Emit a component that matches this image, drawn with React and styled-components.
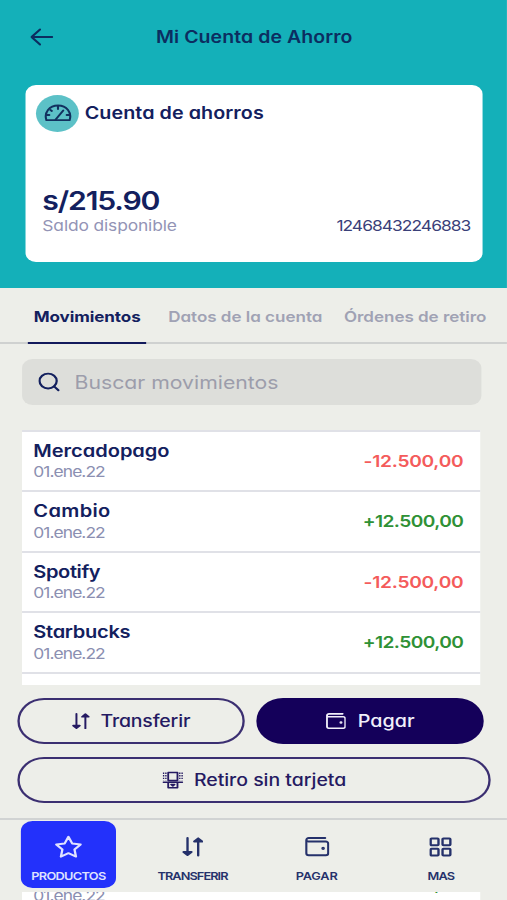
import React from "react";
import styled, { createGlobalStyle } from "styled-components";

const GlobalStyle = createGlobalStyle`
  * { box-sizing: border-box; }
  body {
    margin: 0;
    overflow: hidden;
    background-color: #edeee9;
    font-family: Inter, "Noto Sans", sans-serif;
    font-feature-settings: "cv11";
    color: #13205e;
  }
`;

/* everything is laid out 437px wide and widened to fill the 507px viewport */
const Screen = styled.div`
  position: relative;
  width: 437.07px;
  height: 900px;
  overflow: hidden;
  background-color: #edeee9;
  transform: scaleX(1.16);
  transform-origin: left top;
`;

const Text = styled.span`
  display: block;
  white-space: nowrap;
  font-size: ${({ $size }) => $size}px;
  font-weight: ${({ $weight }) => $weight || 400};
  letter-spacing: ${({ $spacing }) => $spacing || 0}px;
  line-height: ${({ $line }) => $line || 20}px;
  color: ${({ $color }) => $color || "inherit"};
`;

const Header = styled.header`
  height: 287.5px;
  padding: 0 21.2px 0 21.5px;
  background-color: #14b0b9;
`;

const TopBar = styled.div`
  display: grid;
  grid-template-columns: 26px 1fr 26px;
  align-items: center;
  justify-items: center;
  height: 85.4px;
  padding: 0 0 11.4px 1px;
  color: #0c2d60;
`;

const Card = styled.section`
  display: flex;
  flex-direction: column;
  justify-content: space-between;
  height: 177px;
  padding: 9.5px 10.4px 26.5px 9.5px;
  border-radius: 9px;
  background-color: #fff;
`;

const CardHead = styled.div`
  display: flex;
  gap: 5px;
`;

const Badge = styled.div`
  display: flex;
  align-items: center;
  justify-content: center;
  width: 37px;
  height: 37px;
  border-radius: 50%;
  background-color: #5cc1c7;
  color: #12315f;
`;

const CardFoot = styled.div`
  display: flex;
  align-items: flex-end;
  justify-content: space-between;
  padding-left: 5.5px;
`;

const Tabs = styled.nav`
  display: grid;
  grid-template-columns: 116px 151.5px 134px;
  height: 56px;
  padding-left: 24px;
  border-bottom: 2px solid #cfd1d0;
`;

const Tab = styled.div`
  justify-self: start;
  height: 56px;
  padding: 19px 5px 0;
  border-bottom: 2.5px solid ${({ $active }) => ($active ? "#131a5c" : "transparent")};
`;

const Search = styled.div`
  display: flex;
  align-items: center;
  gap: 12.5px;
  height: 45.5px;
  margin: 15.6px 22.4px 0 18.8px;
  padding: 1px 0 0 14.5px;
  border-radius: 9px;
  background-color: #dddeda;
`;

const List = styled.div`
  margin: 25px 23.2px 0 19.4px;
`;

const Row = styled.div`
  display: flex;
  align-items: center;
  justify-content: space-between;
  height: 60.5px;
  padding: 0 14.4px 0 9.3px;
  border-top: 2px solid #e0e1e7;
  background-color: #fff;
`;

const BottomPanel = styled.div`
  position: absolute;
  top: 685px;
  left: 0;
  right: 0;
  height: 206.5px;
  background-color: #edeee9;
`;

const Actions = styled.div`
  display: grid;
  grid-template-columns: 196px 196px;
  gap: 13px 10px;
  height: 133px;
  padding: 13px 0 0 14.6px;
  align-content: start;
`;

const Button = styled.button`
  display: flex;
  align-items: center;
  justify-content: center;
  gap: ${({ $gap }) => $gap || 9}px;
  height: 46px;
  width: ${({ $wide }) => ($wide ? "408.5px" : "auto")};
  grid-column: ${({ $wide }) => ($wide ? "1 / -1" : "auto")};
  padding: 0 0 0 1px;
  border: 2px solid ${({ $filled }) => ($filled ? "#14005a" : "#3b2f71")};
  border-radius: 23px;
  background-color: ${({ $filled }) => ($filled ? "#14005a" : "transparent")};
  color: ${({ $filled }) => ($filled ? "#f1effa" : "#251a62")};
  font: inherit;
  font-feature-settings: "cv11";
`;

const BottomNav = styled.nav`
  display: grid;
  grid-template-columns: repeat(4, 107px);
  justify-items: center;
  height: 73.5px;
  padding: 1.4px 0 0 5.5px;
  border-top: 2px solid #d1d3d3;
`;

const NavItem = styled.div`
  display: flex;
  flex-direction: column;
  align-items: center;
  width: 82px;
  height: 67px;
  padding-top: 13.6px;
  gap: 9.6px;
  border-radius: 10px;
  background-color: ${({ $active }) => ($active ? "#2331fb" : "transparent")};
  color: ${({ $active }) => ($active ? "#dfe2ff" : "#25316b")};
`;

const Icon = styled.svg.attrs({
  fill: "none",
  stroke: "currentColor",
  strokeLinecap: "round",
  strokeLinejoin: "round",
})`
  display: block;
  flex: none;
`;

const ArrowIcon = () => (
  <Icon width="20" height="18" viewBox="0 0 20 18" strokeWidth="1.8">
    <path d="M19 9H1.2M8.5 1.5L1.2 9l7.3 7.5" />
  </Icon>
);

const GaugeIcon = () => (
  <Icon width="24" height="18" viewBox="0 0 24 18" strokeWidth="1.8">
    <path d="M2 16.2C-.2 8.5 4.5 1.5 12 1.5S24.2 8.5 22 16.2Z" />
    <path d="M10 15.5L16.5 6.5M12 2v3M5.5 6l1.2 1M2 11h2.5M19.5 11H22" />
  </Icon>
);

const SearchIcon = () => (
  <Icon width="18.5" height="20" viewBox="0 0 19 20" strokeWidth="2">
    <circle cx="8.7" cy="9" r="7.6" />
    <path d="M14 14.5l3.8 4" />
  </Icon>
);

const SwapIcon = ({ size }) => (
  <Icon width={size} height={size * 1.05} viewBox="0 0 18 19" strokeWidth="2">
    <path d="M4.5 1v15M13.5 18V3" />
    <path d="M1.2 14.6L4.5 17.6l3.3-3Z" fill="currentColor" />
    <path d="M10.2 4.4L13.5 1.4l3.3 3Z" fill="currentColor" />
  </Icon>
);

const WalletIcon = ({ size }) => (
  <Icon width={size} height={size * 0.92} viewBox="0 0 20 18.4" strokeWidth="1.8">
    <path d="M16.5 1H3A2 2 0 0 0 1 3v12.4a2 2 0 0 0 2 2h14a2 2 0 0 0 2-2V6.3a2 2 0 0 0-2-2H3A1.6 1.6 0 0 1 1.1 3" />
    <circle cx="14.8" cy="10.8" r=".6" fill="currentColor" />
  </Icon>
);

const AtmIcon = () => (
  <Icon width="18" height="18" viewBox="0 0 18 18" strokeWidth="1.6">
    <path d="M5 1.5h8v8H5ZM.8 11.3h16.4M5 11.5v5.3h8v-5.3" />
    <path d="M7.5 13.5h3L9 14.8Z" />
    <path d="M1 1.5v8M3 1.5v8M15 1.5v8M17 1.5v8" strokeWidth="1.2" strokeDasharray="1.4 1.2" strokeLinecap="butt" />
  </Icon>
);

const StarIcon = () => (
  <Icon width="24" height="24" viewBox="0 0 24 24" strokeWidth="2">
    <path d="M12 1.8l3.2 6.6 7.3 1-5.3 5 1.3 7.2L12 18.2l-6.5 3.4 1.3-7.2-5.3-5 7.3-1Z" />
  </Icon>
);

const GridIcon = () => (
  <Icon width="19.5" height="20" viewBox="0 0 20 20" strokeWidth="2.1">
    <rect x="1.3" y="1.3" width="6.9" height="6.9" rx=".8" />
    <rect x="11.8" y="1.3" width="6.9" height="6.9" rx=".8" />
    <rect x="1.3" y="11.8" width="6.9" height="6.9" rx=".8" />
    <rect x="11.8" y="11.8" width="6.9" height="6.9" rx=".8" />
  </Icon>
);

const NavIcon = styled.div`
  display: flex;
  align-items: center;
  height: 24px;
`;

const movimientos = [
  { name: "Mercadopago", amount: "-12.500,00", spacing: -0.02 },
  { name: "Cambio", amount: "+12.500,00", spacing: 0.3 },
  { name: "Spotify", amount: "-12.500,00", spacing: -0.33 },
  { name: "Starbucks", amount: "+12.500,00", spacing: -0.24 },
  { name: "Mercadopago", amount: "-12.500,00", spacing: -0.02 },
  { name: "Cambio", amount: "+12.500,00", spacing: 0.3 },
  { name: "Spotify", amount: "-12.500,00", spacing: -0.33 },
  { name: "Starbucks", amount: "+12.500,00", spacing: -0.24 },
];

const navItems = [
  { label: "PRODUCTOS", icon: <StarIcon />, spacing: -0.6, active: true },
  { label: "TRANSFERIR", icon: <SwapIcon size={18.5} />, spacing: -0.8 },
  { label: "PAGAR", icon: <WalletIcon size={21} />, spacing: -0.16 },
  { label: "MAS", icon: <GridIcon />, spacing: -0.8 },
];

function Movimiento({ name, amount, spacing }) {
  const negative = amount.startsWith("-");
  return (
    <Row>
      <div>
        <Text $size={17.3} $weight={600} $spacing={spacing} $line={21.5}>
          {name}
        </Text>
        <Text $size={15} $spacing={-0.8} $color="#8b8fb1" $line={21}>
          01.ene.22
        </Text>
      </div>
      <Text
        $size={16.5}
        $weight={600}
        $spacing={negative ? -0.23 : -0.49}
        $color={negative ? "#f45b5b" : "#2f9136"}
      >
        {amount}
      </Text>
    </Row>
  );
}

export default function App() {
  return (
    <>
      <GlobalStyle />
      <Screen>
        <Header>
          <TopBar>
            <ArrowIcon />
            <Text $size={16.8} $weight={600} $spacing={0.07}>
              Mi Cuenta de Ahorro
            </Text>
          </TopBar>
          <Card>
            <CardHead>
              <Badge>
                <GaugeIcon />
              </Badge>
              <Text $size={17} $weight={600} $spacing={0.06} $line={36.5}>
                Cuenta de ahorros
              </Text>
            </CardHead>
            <CardFoot>
              <div>
                <Text $size={26} $weight={600} $spacing={-1} $line={30}>
                  s/215.90
                </Text>
                <Text $size={15} $spacing={-0.12} $color="#9394b6">
                  Saldo disponible
                </Text>
              </div>
              <Text $size={15} $spacing={-0.83} $color="#3a4079">
                12468432246883
              </Text>
            </CardFoot>
          </Card>
        </Header>

        <Tabs>
          <Tab $active>
            <Text $size={14.7} $weight={700} $spacing={-0.06}>
              Movimientos
            </Text>
          </Tab>
          <Tab>
            <Text $size={14.7} $weight={600} $spacing={-0.02} $color="#a0a2b4">
              Datos de la cuenta
            </Text>
          </Tab>
          <Tab>
            <Text $size={14.7} $weight={600} $spacing={-0.03} $color="#a0a2b4">
              Órdenes de retiro
            </Text>
          </Tab>
        </Tabs>

        <Search>
          <SearchIcon />
          <Text $size={18.3} $color="#9c9dab">
            Buscar movimientos
          </Text>
        </Search>

        <List>
          {movimientos.map((mov, index) => (
            <Movimiento key={index} {...mov} />
          ))}
        </List>

        <BottomPanel>
          <Actions>
            <Button>
              <SwapIcon size={15.5} />
              <Text $size={16.8} $weight={500} $spacing={-0.14}>
                Transferir
              </Text>
            </Button>
            <Button $filled $gap={10}>
              <WalletIcon size={17.5} />
              <Text $size={17} $weight={500} $spacing={0.02}>
                Pagar
              </Text>
            </Button>
            <Button $wide>
              <AtmIcon />
              <Text $size={16.8} $weight={500} $spacing={-0.02}>
                Retiro sin tarjeta
              </Text>
            </Button>
          </Actions>
          <BottomNav>
            {navItems.map(({ label, icon, spacing, active }) => (
              <NavItem key={label} $active={active}>
                <NavIcon>{icon}</NavIcon>
                <Text $size={11} $weight={600} $spacing={spacing} $line={14}>
                  {label}
                </Text>
              </NavItem>
            ))}
          </BottomNav>
        </BottomPanel>
      </Screen>
    </>
  );
}
